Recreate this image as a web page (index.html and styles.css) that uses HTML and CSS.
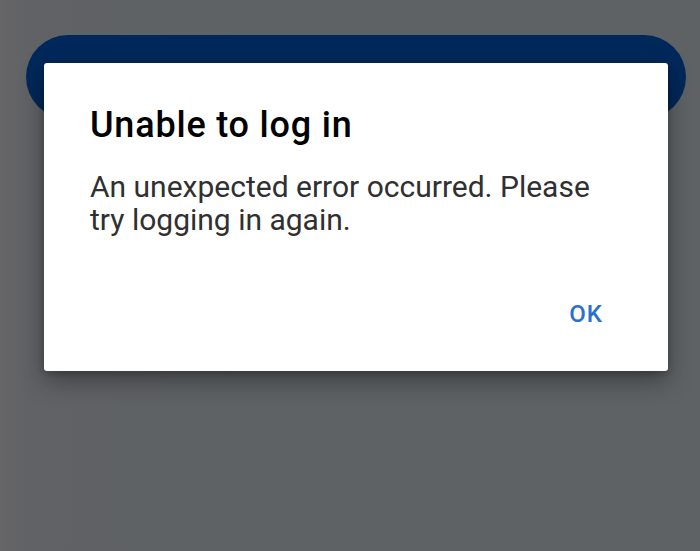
FILE: index.html
```html
<!DOCTYPE html>
<html>
<head>
<meta charset="utf-8">
<link rel="stylesheet" href="styles.css">
</head>
<body>
<div class="screen">
  <div class="pill"></div>
  <div class="dialog">
    <h1 class="title">Unable to log in</h1>
    <p class="message">An unexpected error occurred. Please try logging in again.</p>
    <div class="actions"><span class="ok">OK</span></div>
  </div>
</div>
</body>
</html>
```
FILE: styles.css
```css
html, body {
  margin: 0;
  padding: 0;
}
body {
  width: 700px;
  height: 551px;
  overflow: hidden;
  font-family: Roboto, "Noto Sans", sans-serif;
}
.screen {
  position: relative;
  width: 700px;
  height: 551px;
  background:
    linear-gradient(90deg, rgba(108,104,104,0.55) 0px, rgba(100,98,102,0.35) 30px, rgba(95,98,102,0) 240px),
    #5e6265;
  padding: 35px 14px 0 26px;
  box-sizing: border-box;
}
.pill {
  height: 84px;
  border-radius: 42px;
  background: #00285a;
}
.dialog {
  position: absolute;
  left: 44px;
  top: 63px;
  width: 624px;
  height: 308px;
  box-sizing: border-box;
  background: #fff;
  border-radius: 3px;
  box-shadow: 0 10px 24px rgba(0,0,0,0.35), 0 2px 6px rgba(0,0,0,0.2);
  padding: 40px 46px 0 46px;
  display: flex;
  flex-direction: column;
}
.title {
  margin: 0;
  font-size: 36px;
  font-weight: 500;
  letter-spacing: 0.8px;
  color: #000;
  line-height: 44px;
}
.message {
  margin: 23px 0 0 0;
  font-size: 30px;
  line-height: 33px;
  color: #303030;
  font-weight: 400;
}
.actions {
  margin-top: auto;
  margin-bottom: 43px;
  display: flex;
  justify-content: flex-end;
  padding-right: 19px;
}
.ok {
  font-size: 24px;
  line-height: 28px;
  font-weight: 500;
  color: #2b6fd0;
  letter-spacing: 1px;
}
```
